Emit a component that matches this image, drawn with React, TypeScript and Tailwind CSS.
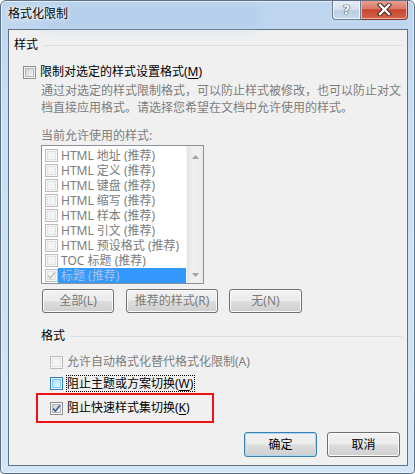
import React from 'react';

type CbState = 'normal' | 'disabled' | 'hover' | 'checked' | 'disabledChecked';

function Checkbox({ state }: { state: CbState }) {
  const disabled = state === 'disabled' || state === 'disabledChecked';
  const outer = disabled
    ? 'border-[#bcbcbc] bg-[#f7f7f7]'
    : state === 'hover'
    ? 'border-[#3c7fb1] bg-[#e8f6fd]'
    : 'border-[#8e8f8f] bg-[#f4f4f4]';
  const inner = disabled
    ? 'border-[#e2e2e2] bg-[#f4f4f4]'
    : state === 'hover'
    ? 'border-[#79c6f9] bg-[linear-gradient(135deg,#b1dffd,#e9f7fe)]'
    : 'border-[#b4b8bd] bg-[linear-gradient(135deg,#cbcfd5,#f6f6f6)]';
  const checked = state === 'checked' || state === 'disabledChecked';
  return (
    <div className={`relative w-[13px] h-[13px] shrink-0 border p-[1px] ${outer}`}>
      <div className={`w-full h-full border ${inner}`} />
      {checked && (
        <svg className="absolute left-[-1px] top-[-1px]" width="13" height="13" viewBox="0 0 13 13">
          <path
            d="M3.2 6.6 L5.4 9.2 L9.8 3.4"
            fill="none"
            stroke={state === 'checked' ? '#4a5f97' : '#c4c4c4'}
            strokeWidth="1.7"
          />
        </svg>
      )}
    </div>
  );
}

function Btn({ w, children, def, dim }: { w: string; children: React.ReactNode; def?: boolean; dim?: boolean }) {
  return (
    <div
      className={`${w} h-full flex items-center justify-center rounded-[3px] border ${
        def ? 'border-[#3c7fb1] shadow-[inset_0_0_0_1px_#a8dcf6]' : 'border-[#707070] shadow-[inset_0_0_0_1px_#fbfbfb]'
      } bg-[linear-gradient(to_bottom,#f2f2f2_0%,#ebebeb_48%,#dddddd_52%,#cfcfcf_100%)] ${
        dim ? 'text-[#7a7a7a]' : 'text-black'
      }`}
    >
      {children}
    </div>
  );
}

const items = [
  'HTML 地址 (推荐)',
  'HTML 定义 (推荐)',
  'HTML 键盘 (推荐)',
  'HTML 缩写 (推荐)',
  'HTML 样本 (推荐)',
  'HTML 引文 (推荐)',
  'HTML 预设格式 (推荐)',
  'TOC 标题 (推荐)',
  '标题 (推荐)',
];

export default function App() {
  return (
    <div className="w-[415px] h-[474px] relative overflow-hidden rounded-t-[6px] rounded-b-[4px] border border-[#5d7187] bg-[linear-gradient(to_bottom,#bdd5ee,#cadff4_25%,#d4e5f6)] shadow-[inset_0_0_0_1px_#e3eefa] font-['Noto_Sans','Noto_Sans_CJK_SC',sans-serif] text-[12px] leading-none text-black">
      <div className="absolute left-[40px] top-[6px] w-[220px] h-[22px] rounded-full bg-[#a9c8e8] opacity-50 blur-[6px]" />
      <div className="relative h-[28px] flex items-center pl-[7px] pb-[2px]">
        <span className="[text-shadow:0_0_6px_#ffffff,0_0_3px_#ffffff]">格式化限制</span>
      </div>
      <div className="absolute top-[-1px] right-[6px] flex h-[20px]">
        <div className="w-[29px] h-full flex items-center justify-center rounded-bl-[4px] border border-t-0 border-[#6f7f93] bg-[linear-gradient(to_bottom,#e6eef7,#d3e0ee_50%,#bccde2_52%,#c9d9ec)] shadow-[inset_0_0_0_1px_#eef4fb]">
          <span className="font-['DejaVu_Sans',sans-serif] font-bold text-[13px] text-white [text-shadow:0_0_1px_#3a4450,0_0_1px_#3a4450,0_0_1px_#3a4450]">?</span>
        </div>
        <div className="w-[47px] h-full flex items-center justify-center rounded-br-[4px] border border-t-0 border-l-0 border-[#7a3b33] bg-[linear-gradient(to_bottom,#e8a597,#d97a66_45%,#c8452f_52%,#d4644b)] shadow-[inset_0_0_0_1px_#eeb2a6]">
          <svg width="15" height="13" viewBox="0 0 15 13">
            <path d="M3 2 L12 11 M12 2 L3 11" stroke="#3e2520" strokeWidth="4.4" strokeLinecap="square" />
            <path d="M3 2 L12 11 M12 2 L3 11" stroke="#ffffff" strokeWidth="2.4" strokeLinecap="square" />
          </svg>
        </div>
      </div>

      <div className="ml-[7px] mr-[6px] h-[437px] border border-[#5f7185] bg-[#f0f0f0] flex flex-col">
        {/* header 样式 */}
        <div className="mt-[7px] h-[16px] flex items-center pl-[5px] pr-[5px]">
          <span>样式</span>
          <div className="flex-1 h-px bg-[#d5dfe5] ml-[5px]" />
        </div>
        {/* M row */}
        <div className="mt-[11px] h-[16px] flex items-center pl-[14px] gap-[4px]">
          <Checkbox state="normal" />
          <span>
            限制对选定的样式设置格式(<span className="underline underline-offset-[2px]">M</span>)
          </span>
        </div>
        {/* description */}
        <div className="mt-[2px] pl-[32px] text-[#7d7d7d]">
          <div className="h-[17px] flex items-center whitespace-nowrap">
            通过对选定的样式限制格式，可以防止样式被修改，也可以防止对文
          </div>
          <div className="h-[17px] flex items-center whitespace-nowrap">
            档直接应用格式。请选择您希望在文档中允许使用的样式。
          </div>
        </div>
        <div className="mt-[12px] h-[16px] flex items-center pl-[32px] text-[#7d7d7d]">当前允许使用的样式:</div>
        {/* listbox */}
        <div className="mt-[1px] ml-[32px] w-[163px] h-[139px] border border-[#8d9097] bg-white flex">
          <div className="flex-1 pt-[2px] flex flex-col">
            {items.map((t, i) => {
              const last = i === items.length - 1;
              return (
                <div key={t} className="h-[15px] flex items-center pl-[3px]">
                  <Checkbox state={last ? 'disabledChecked' : 'disabled'} />
                  <div
                    className={`flex-1 h-full flex items-center pl-[3px] whitespace-nowrap overflow-hidden ${
                      last ? 'bg-[#3399ff] text-[#a9c3df]' : 'text-[#7d7d7d]'
                    }`}
                  >
                    {t}
                  </div>
                </div>
              );
            })}
          </div>
          <div className="w-[17px] h-full flex flex-col justify-between items-center pt-[9px] pb-[6px] border-l border-[#f4f4f4] bg-[linear-gradient(to_right,#e6e6e6,#f0f0f0_40%,#ececec)]">
            <svg width="7" height="4" viewBox="0 0 7 4">
              <path d="M0 4 L3.5 0 L7 4 Z" fill="#a3a3a3" />
            </svg>
            <svg width="7" height="4" viewBox="0 0 7 4">
              <path d="M0 0 L7 0 L3.5 4 Z" fill="#a3a3a3" />
            </svg>
          </div>
        </div>
        {/* buttons */}
        <div className="mt-[5px] h-[24px] ml-[33px] flex">
          <Btn w="w-[72px]" dim>全部(L)</Btn>
          <div className="w-[12px]" />
          <Btn w="w-[92px]" dim>推荐的样式(R)</Btn>
          <div className="w-[11px]" />
          <Btn w="w-[73px]" dim>无(N)</Btn>
        </div>
        {/* header 格式 */}
        <div className="mt-[15px] h-[16px] flex items-center pl-[32px] pr-[5px]">
          <span>格式</span>
          <div className="flex-1 h-px bg-[#d5dfe5] ml-[5px]" />
        </div>
        {/* A row */}
        <div className="mt-[10px] h-[16px] flex items-center pl-[41px] gap-[4px] text-[#7d7d7d]">
          <Checkbox state="disabled" />
          <span>允许自动格式化替代格式化限制(A)</span>
        </div>
        {/* W row */}
        <div className="mt-[5px] h-[17px] flex items-center pl-[41px] gap-[3px]">
          <Checkbox state="hover" />
          <span className="h-[17px] flex items-center border border-dotted border-black pl-[0px] pr-[1px]">
            阻止主题或方案切换(<span className="underline underline-offset-[2px]">W</span>)
          </span>
        </div>
        {/* K row */}
        <div className="mt-[1px] ml-[27px] w-[178px] h-[30px] border-2 border-[#ee1111] flex items-center pl-[12px] gap-[4px]">
          <Checkbox state="checked" />
          <span>
            阻止快速样式集切换(<span className="underline underline-offset-[2px]">K</span>)
          </span>
        </div>
        {/* OK / Cancel */}
        <div className="mt-[9px] h-[25px] flex justify-end pr-[7px]">
          <Btn w="w-[73px]" def>确定</Btn>
          <div className="w-[10px]" />
          <Btn w="w-[73px]">取消</Btn>
        </div>
      </div>
    </div>
  );
}
